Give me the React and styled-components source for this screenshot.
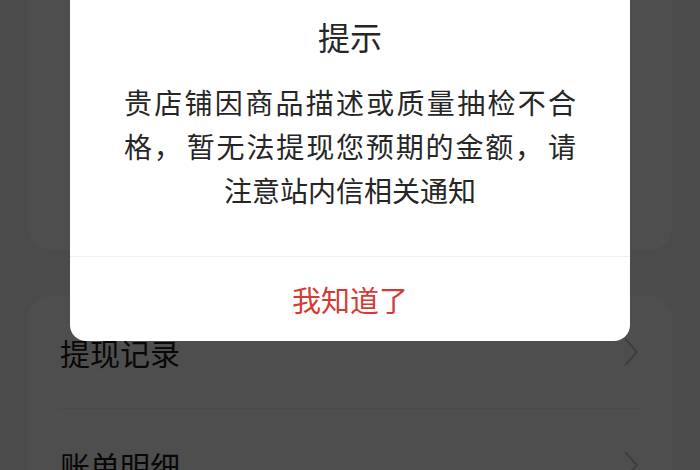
import React from "react";
import styled, { createGlobalStyle } from "styled-components";

const GlobalStyle = createGlobalStyle`
  html, body {
    margin: 0;
    padding: 0;
    width: 700px;
    height: 470px;
    overflow: hidden;
    font-family: "Noto Sans CJK SC", "Noto Sans", sans-serif;
  }
`;

const Page = styled.div`
  position: relative;
  width: 700px;
  height: 470px;
  overflow: hidden;
  background: #f1f1f1;
  padding: 0 28px;
  box-sizing: border-box;
  display: flex;
  flex-direction: column;
  gap: 46px;
`;

const Card = styled.div`
  background: #fafafa;
  border-radius: ${(p) => (p.$top ? "0 0 22px 22px" : "22px 22px 0 0")};
  height: ${(p) => (p.$top ? "250px" : "auto")};
  flex: ${(p) => (p.$top ? "none" : "1")};
  padding: 0 32px;
`;

const Row = styled.div`
  height: 112px;
  display: flex;
  align-items: center;
  justify-content: space-between;
  border-bottom: ${(p) => (p.$last ? "none" : "1px solid #ececec")};
  font-size: 30px;
  color: #1a1a1a;
`;

const Chevron = () => (
  <svg width="18" height="30" viewBox="0 0 18 30" fill="none">
    <polyline points="3,2 15,15 3,28" stroke="#c8c8c8" strokeWidth="2" />
  </svg>
);

const Overlay = styled.div`
  position: absolute;
  inset: 0;
  background: rgba(0, 0, 0, 0.69);
  display: flex;
  justify-content: center;
  align-items: flex-start;
`;

const Dialog = styled.div`
  width: 560px;
  background: #ffffff;
  border-radius: 0 0 16px 16px;
  display: flex;
  flex-direction: column;
`;

const Title = styled.div`
  padding-top: 14px;
  font-size: 32px;
  line-height: 44px;
  text-align: center;
  color: #262626;
`;

const Message = styled.div`
  margin-top: 22px;
  padding: 0 54px 44px;
  font-size: 28px;
  line-height: 44px;
  text-align: justify;
  text-align-last: center;
  color: #262626;
  border-bottom: 1px solid #f0f0f0;
`;

const Punct = styled.span`
  margin-right: 3px;
`;

const Action = styled.button`
  height: 84px;
  border: none;
  background: transparent;
  font-family: inherit;
  font-size: 29px;
  color: #d53b35;
  cursor: pointer;
  padding: 0;
`;

export default function App() {
  return (
    <>
      <GlobalStyle />
      <Page>
        <Card $top />
        <Card>
          <Row>
            提现记录
            <Chevron />
          </Row>
          <Row $last>
            账单明细
            <Chevron />
          </Row>
        </Card>
        <Overlay>
          <Dialog>
            <Title>提示</Title>
            <Message lang="zh-CN">
              贵店铺因商品描述或质量抽检不合格<Punct>，</Punct>暂无法提现您预期的金额<Punct>，</Punct>请注意站内信相关通知
            </Message>
            <Action>我知道了</Action>
          </Dialog>
        </Overlay>
      </Page>
    </>
  );
}
